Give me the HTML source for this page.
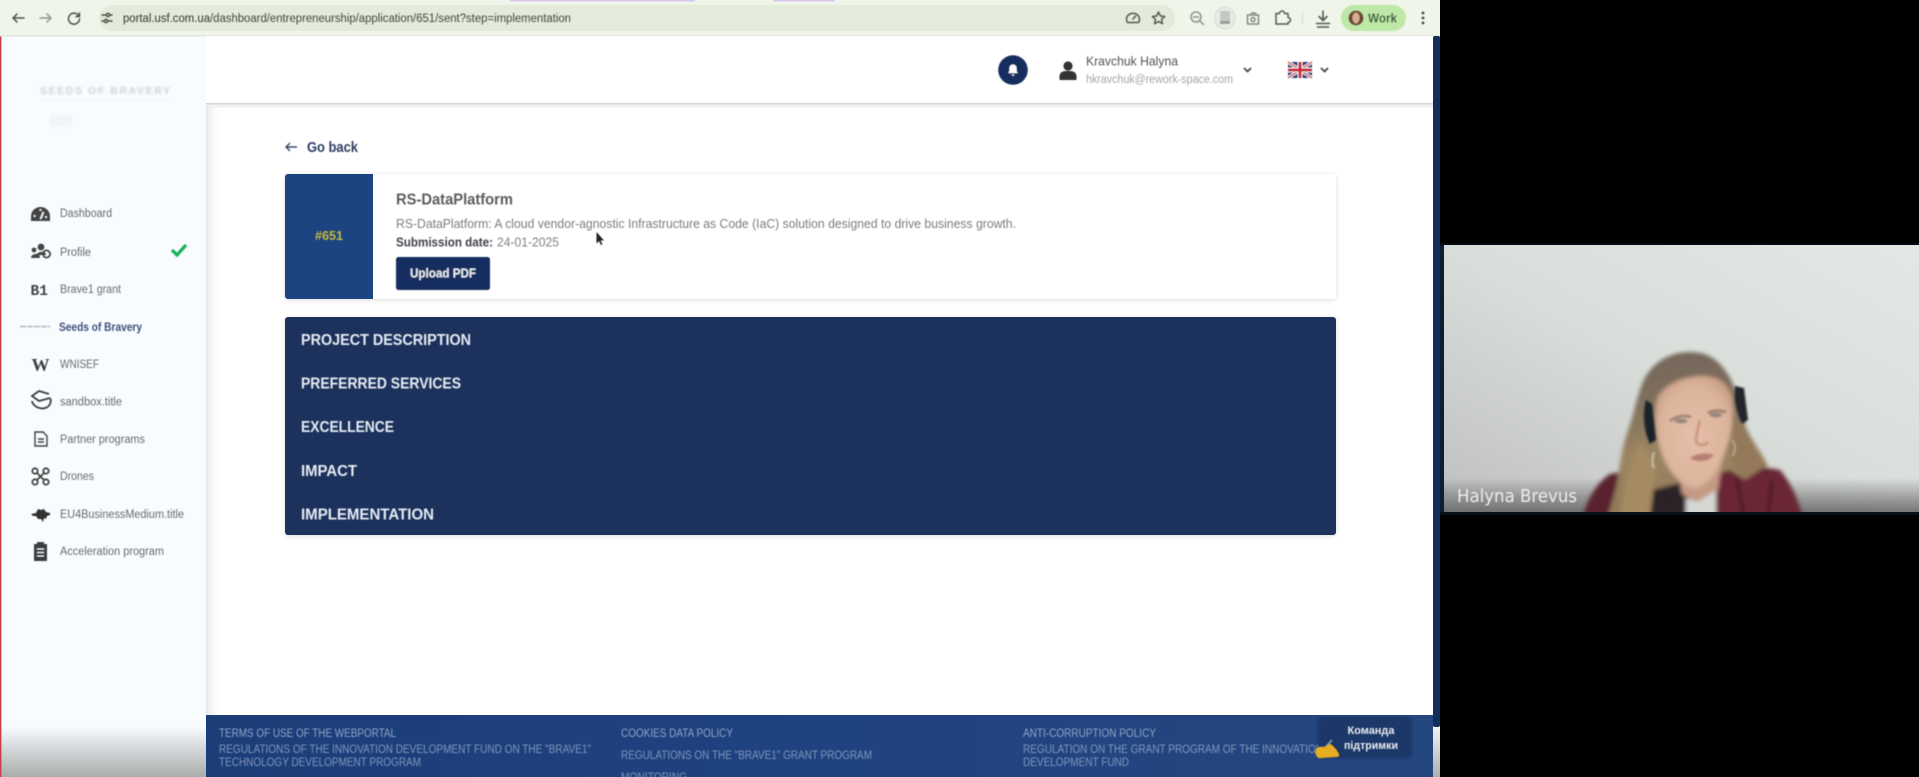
<!DOCTYPE html>
<html lang="en"><head><meta charset="utf-8"><title>RS-DataPlatform</title>
<style>html,body{margin:0;padding:0;background:#000;width:1919px;height:777px;overflow:hidden}svg{display:block}text{font-family:"Liberation Sans",sans-serif}</style></head>
<body>
<svg xmlns="http://www.w3.org/2000/svg" width="1919" height="777" viewBox="0 0 1919 777">
<defs>
<filter id="b" x="-5%" y="-5%" width="110%" height="110%"><feGaussianBlur stdDeviation="0.55"/></filter>
<filter id="b2" x="-20%" y="-20%" width="140%" height="140%"><feGaussianBlur stdDeviation="2"/></filter>
<filter id="b3" x="-40%" y="-40%" width="180%" height="180%"><feGaussianBlur stdDeviation="4"/></filter>
<filter id="b1" x="-30%" y="-30%" width="160%" height="160%"><feGaussianBlur stdDeviation="1"/></filter>
<filter id="sh" x="-3%" y="-10%" width="106%" height="125%"><feDropShadow dx="0" dy="1" stdDeviation="2.5" flood-color="#000" flood-opacity=".14"/></filter>
<linearGradient id="foot" x1="0" x2="1" y1="0" y2="0"><stop offset="0" stop-color="#1b3d78"/><stop offset=".5" stop-color="#1f4280"/><stop offset="1" stop-color="#25477f"/></linearGradient>
<linearGradient id="fade" x1="0" x2="0" y1="0" y2="1"><stop offset="0" stop-color="#a9abab" stop-opacity="0"/><stop offset="1" stop-color="#aaacac"/></linearGradient>
<linearGradient id="sbg" x1="0" x2="1" y1="0" y2="0"><stop offset="0" stop-color="#e4e7ea"/><stop offset="1" stop-color="#fff" stop-opacity="0"/></linearGradient>
<linearGradient id="vb" x1="1" x2="0" y1="0" y2="1"><stop offset="0" stop-color="#e4e8e4"/><stop offset=".5" stop-color="#dadeda"/><stop offset="1" stop-color="#bec0c0"/></linearGradient>
<linearGradient id="vf" x1="0" x2="0" y1="0" y2="1"><stop offset="0" stop-color="#555" stop-opacity="0"/><stop offset="1" stop-color="#5c5c5c" stop-opacity=".8"/></linearGradient>
<linearGradient id="sc" x1="0" x2="0" y1="0" y2="1"><stop offset="0" stop-color="#f2f2f2"/><stop offset="1" stop-color="#aeb0b0"/></linearGradient>
<linearGradient id="hair" x1="0" x2="0" y1="0" y2="1"><stop offset="0" stop-color="#75675a"/><stop offset=".3" stop-color="#7f6f5d"/><stop offset=".65" stop-color="#9c8561"/><stop offset="1" stop-color="#8f7858"/></linearGradient>
<radialGradient id="skin" cx=".5" cy=".55" r=".6"><stop offset="0" stop-color="#e6bea9"/><stop offset=".75" stop-color="#dcb49c"/><stop offset="1" stop-color="#c99f85"/></radialGradient>
<clipPath id="vc"><rect x="1444" y="245" width="475" height="267"/></clipPath>
</defs>

<rect width="1919" height="777" fill="#000"/>
<!-- page -->
<rect x="0" y="0" width="1440" height="777" fill="#fff"/>
<!-- sidebar -->
<rect x="0" y="36" width="206" height="741" fill="#f8fcff"/>
<rect x="206" y="36" width="16" height="680" fill="url(#sbg)"/>
<rect x="0" y="726" width="206" height="51" fill="url(#fade)"/>
<rect x="0" y="36" width="1.4" height="741" fill="#c8404a"/>

<!-- chrome -->
<rect x="0" y="0" width="1440" height="36" fill="#f0f5e9"/>
<rect x="0" y="35" width="1440" height="1.5" fill="#e0e6da"/>
<rect x="510" y="0" width="185" height="1.4" fill="#d9c6ee"/>
<rect x="773" y="0" width="62" height="1.4" fill="#d9c6ee"/>
<rect x="99" y="5" width="1076" height="26" rx="13" fill="#e4ebda"/>
<g filter="url(#b)">
<g fill="none" stroke="#4a4f48" stroke-width="1.5" stroke-linecap="round" stroke-linejoin="round">
<path d="M24 18H13M17 14l-4 4 4 4"/>
<path d="M40 18h11M47 14l4 4-4 4" stroke="#8f948c"/>
<path d="M78.5 15.5A5.5 5.5 0 1 0 79.5 19M79.5 13v3.5H76"/>
<path d="M102 15h4M110 15h2M102 21h2M108 21h4"/><circle cx="108" cy="15" r="1.6"/><circle cx="106" cy="21" r="1.6"/>
</g>
<text x="123" y="22" font-size="11.5" fill="#3f463d" textLength="448" lengthAdjust="spacingAndGlyphs"><tspan fill="#30362f">portal.usf.com.ua</tspan>/dashboard/entrepreneurship/application/651/sent?step=implementation</text>
<!-- right toolbar icons -->
<g fill="none" stroke="#555b52" stroke-width="1.5" stroke-linecap="round" stroke-linejoin="round">
<path d="M1127.5 22.5a6.5 6 0 1 1 11 0z"/><path d="M1133 19l2.5-3"/>
<path d="M1158.5 12l1.9 4 4.3.5-3.2 2.9.9 4.3-3.9-2.2-3.9 2.2.9-4.3-3.2-2.9 4.3-.5z"/>
<g stroke="#8f948c"><circle cx="1196" cy="17" r="5"/><path d="M1200 21l3.5 3.5M1193.5 17h5"/></g>
<path d="M1247.5 15h11v9h-11zM1250.5 15l1.5-2h3l1.5 2" stroke="#858a82"/><circle cx="1253" cy="19.5" r="2" stroke="#858a82"/>
<path d="M1276 14.5h3.5a2.5 2.5 0 0 1 5 0h3.5v4a2.5 2.5 0 0 1 0 5V25h-12z" transform="translate(0 -1)"/>
<path d="M1323 11v9M1319 16.5l4 4 4-4M1316.5 23.5h13M1317.5 27h11" stroke-width="1.6"/>
</g>
<rect x="1215" y="7" width="20" height="22" rx="10" fill="#e8ebe4" stroke="#d7dad3"/>
<rect x="1220" y="11" width="10" height="13" fill="#c4c8c2"/><rect x="1220" y="21" width="10" height="3" fill="#9a9f98"/>
<rect x="1302" y="12" width="1" height="12" fill="#d2d8cc"/>
<rect x="1341" y="5" width="65" height="26" rx="13" fill="#bde8a8"/>
<circle cx="1356" cy="18" r="7.5" fill="#6d4a34"/><ellipse cx="1356" cy="18" rx="3.6" ry="5.5" fill="#d7ad90"/>
<text x="1368" y="22.5" font-size="12.5" font-weight="700" fill="#3a5a38" textLength="29" lengthAdjust="spacingAndGlyphs">Work</text>
<circle cx="1423" cy="13" r="1.4" fill="#444"/><circle cx="1423" cy="18" r="1.4" fill="#444"/><circle cx="1423" cy="23" r="1.4" fill="#444"/>
</g>

<!-- header -->
<rect x="206" y="36" width="1227" height="68" fill="#fff"/>
<rect x="206" y="103" width="1227" height="1.6" fill="#d4d6d8"/>
<rect x="206" y="104.6" width="1227" height="3" fill="#f0f1f2"/>
<g filter="url(#b)">
<circle cx="1013" cy="70" r="14.8" fill="#182f5f"/>
<path d="M1013 64.5a3.6 3.6 0 0 0-3.6 3.6v3l-1.2 2h9.6l-1.2-2v-3a3.6 3.6 0 0 0-3.6-3.6zM1011.6 74.5h2.8l-1.4 1.6z" fill="#fff"/>
<circle cx="1068" cy="66" r="4.6" fill="#333"/><path d="M1059.5 80v-4.5a6 5 0 0 1 6-4.5h5a6 5 0 0 1 6 4.5V80z" fill="#333"/>
<text x="1086" y="65.5" font-size="12.5" fill="#555" textLength="92" lengthAdjust="spacingAndGlyphs">Kravchuk Halyna</text>
<text x="1086" y="83" font-size="11.5" fill="#a2a4a6" textLength="147" lengthAdjust="spacingAndGlyphs">hkravchuk@rework-space.com</text>
<path d="M1244 68l3.5 3.5 3.5-3.5M1321 68l3.5 3.5 3.5-3.5" fill="none" stroke="#444" stroke-width="1.7"/>
<rect x="1288" y="62" width="24" height="16" rx="2" fill="#1f3a78"/>
<path d="M1288 62l24 16M1312 62l-24 16" stroke="#f2e8ea" stroke-width="3.4"/>
<path d="M1288 62l24 16M1312 62l-24 16" stroke="#c63650" stroke-width="1.2"/>
<path d="M1300 62v16M1288 70h24" stroke="#f2e8ea" stroke-width="5"/>
<path d="M1300 62v16M1288 70h24" stroke="#c82840" stroke-width="3"/>
</g>

<!-- faint logo -->
<g filter="url(#b1)" opacity=".85">
<text x="40" y="94" font-size="10.5" font-weight="700" fill="#c8cacb" textLength="130" lengthAdjust="spacing">SEEDS OF BRAVERY</text>
<rect x="42" y="100" width="126" height="1.5" fill="#eceeee"/>
<rect x="50" y="115" width="22" height="12" fill="#f1f3f4"/>
</g>

<!-- sidebar menu -->
<g filter="url(#b)">
<g font-size="11.5" fill="#676a6e">
<text x="60" y="217" textLength="52" lengthAdjust="spacingAndGlyphs">Dashboard</text>
<text x="60" y="256" textLength="31" lengthAdjust="spacingAndGlyphs">Profile</text>
<text x="60" y="293" textLength="61" lengthAdjust="spacingAndGlyphs">Brave1 grant</text>
<text x="59" y="331" font-weight="700" fill="#3f4d7a" textLength="83" lengthAdjust="spacingAndGlyphs">Seeds of Bravery</text>
<text x="60" y="368" textLength="39" lengthAdjust="spacingAndGlyphs">WNISEF</text>
<text x="60" y="405.5" textLength="62" lengthAdjust="spacingAndGlyphs">sandbox.title</text>
<text x="60" y="443" textLength="85" lengthAdjust="spacingAndGlyphs">Partner programs</text>
<text x="60" y="480" textLength="34" lengthAdjust="spacingAndGlyphs">Drones</text>
<text x="60" y="518" textLength="124" lengthAdjust="spacingAndGlyphs">EU4BusinessMedium.title</text>
<text x="60" y="555" textLength="104" lengthAdjust="spacingAndGlyphs">Acceleration program</text>
</g>
<!-- dashboard -->
<path d="M31 221v-5a9.5 9 0 0 1 19 0v5z" fill="#444"/>
<path d="M40.5 219l3-7" stroke="#f8fcff" stroke-width="1.6"/><circle cx="34.5" cy="216" r="1" fill="#f8fcff"/><circle cx="46" cy="217" r="1" fill="#f8fcff"/><circle cx="40.5" cy="210" r="1" fill="#f8fcff"/>
<!-- profile -->
<circle cx="41" cy="247" r="3.4" fill="#444"/><circle cx="34" cy="250" r="2.4" fill="#444"/><path d="M31 258c0-4 6-5 8-3 1 1 1 3 1 3z" fill="#444"/><path d="M36 255c2-4 9-4 10-1v1z" fill="#444"/><circle cx="46.5" cy="254" r="3.6" fill="none" stroke="#444" stroke-width="1.8"/>
<path d="M172 250l5 5 9-10" fill="none" stroke="#14b25c" stroke-width="3.2"/>
<text x="30.5" y="295" font-size="15" font-weight="700" fill="#444" style="font-family:'Liberation Mono',monospace" textLength="17.5" lengthAdjust="spacingAndGlyphs">B1</text>
<path d="M20 326.5h30" stroke="#b3b5b8" stroke-width="1.6" stroke-dasharray="6 1"/>
<text x="31.5" y="371" font-size="18" font-weight="700" fill="#3c3f42" style="font-family:'Liberation Serif',serif" textLength="18" lengthAdjust="spacingAndGlyphs">W</text>
<!-- sandbox -->
<path d="M49 394l-10 -3-7 5 7 5 11 -3M32 401c1 7 14 11 18 3M50 398c1 2 1 4 0 6" fill="none" stroke="#3c3f42" stroke-width="1.8"/>
<!-- doc -->
<path d="M35 432h8l4 4v10H35zM38 439h6M38 442h6" fill="none" stroke="#3f4245" stroke-width="1.4"/>
<!-- drone -->
<g fill="none" stroke="#444" stroke-width="1.8"><circle cx="35" cy="471" r="2.7"/><circle cx="46" cy="471" r="2.7"/><circle cx="35" cy="482" r="2.7"/><circle cx="46" cy="482" r="2.7"/><path d="M37 473l7 7M44 473l-7 7"/></g>
<!-- ukraine -->
<path d="M31 514l5-1 2-4 3 1 3-1 2 3 4 1 0 2-3 1-1 3-2-1-1 4-2-3-3 0-2-3-3 0z" fill="#333"/>
<!-- clipboard -->
<path d="M34 544h3v-2h7v2h3v17H34z" fill="#3a3d40"/><path d="M37 549h7M37 552.5h7M37 556h7" stroke="#f8fcff" stroke-width="1"/>
</g>

<!-- go back -->
<g filter="url(#b)">
<path d="M297 147h-11M290 143l-4 4 4 4" fill="none" stroke="#3a4668" stroke-width="1.4"/>
<text x="307" y="152" font-size="14.5" font-weight="700" fill="#2f3d63" textLength="51" lengthAdjust="spacingAndGlyphs">Go back</text>
</g>

<!-- card -->
<rect x="285" y="174" width="1051" height="125" rx="3" fill="#fff" filter="url(#sh)"/>
<path d="M288 174h85v125h-85a3 3 0 0 1-3-3V177a3 3 0 0 1 3-3z" fill="#1c4480"/>
<g filter="url(#b)">
<text x="315" y="240" font-size="12.5" font-weight="700" fill="#c9bb3f" textLength="28" lengthAdjust="spacingAndGlyphs">#651</text>
<text x="396" y="204.5" font-size="16" font-weight="700" fill="#5a5d60" textLength="117" lengthAdjust="spacingAndGlyphs">RS-DataPlatform</text>
<text x="396" y="228" font-size="13" fill="#7b7d80" textLength="620" lengthAdjust="spacingAndGlyphs">RS-DataPlatform: A cloud vendor-agnostic Infrastructure as Code (IaC) solution designed to drive business growth.</text>
<text x="396" y="246.5" font-size="13" font-weight="700" fill="#414349" textLength="97" lengthAdjust="spacingAndGlyphs">Submission date:</text>
<text x="497" y="246.5" font-size="13" fill="#7f8184" textLength="62" lengthAdjust="spacingAndGlyphs">24-01-2025</text>
<rect x="396" y="257" width="94" height="33" rx="2.5" fill="#182f5e"/>
<text x="410" y="277.5" font-size="13" font-weight="700" fill="#e8ecf2" textLength="66" lengthAdjust="spacingAndGlyphs">Upload PDF</text>
<path d="M596.5 232v11.5l2.6-2.4 1.8 4 1.5-.7-1.8-3.9h3.4z" fill="#222"/>
</g>

<!-- accordion -->
<rect x="285" y="317" width="1051" height="218" rx="3" fill="#1a305b" filter="url(#sh)"/>
<g filter="url(#b)" font-size="16" font-weight="700" fill="#e6ebf3">
<text x="301" y="345" textLength="170" lengthAdjust="spacingAndGlyphs">PROJECT DESCRIPTION</text>
<text x="301" y="388.5" textLength="160" lengthAdjust="spacingAndGlyphs">PREFERRED SERVICES</text>
<text x="301" y="432" textLength="93" lengthAdjust="spacingAndGlyphs">EXCELLENCE</text>
<text x="301" y="476" textLength="56" lengthAdjust="spacingAndGlyphs">IMPACT</text>
<text x="301" y="519.5" textLength="133" lengthAdjust="spacingAndGlyphs">IMPLEMENTATION</text>
</g>

<!-- footer -->
<rect x="206" y="715" width="1227" height="62" fill="url(#foot)"/>
<g filter="url(#b)" font-size="11.5" fill="#8fa4c6">
<text x="219" y="737" textLength="177" lengthAdjust="spacingAndGlyphs">TERMS OF USE OF THE WEBPORTAL</text>
<text x="219" y="753" fill="#7f96bc" textLength="372" lengthAdjust="spacingAndGlyphs">REGULATIONS OF THE INNOVATION DEVELOPMENT FUND ON THE "BRAVE1"</text>
<text x="219" y="766" fill="#7f96bc" textLength="202" lengthAdjust="spacingAndGlyphs">TECHNOLOGY DEVELOPMENT PROGRAM</text>
<text x="621" y="737" textLength="112" lengthAdjust="spacingAndGlyphs">COOKIES DATA POLICY</text>
<text x="621" y="759" fill="#7f96bc" textLength="251" lengthAdjust="spacingAndGlyphs">REGULATIONS ON THE "BRAVE1" GRANT PROGRAM</text>
<text x="621" y="781" fill="#7f96bc" textLength="66" lengthAdjust="spacingAndGlyphs">MONITORING</text>
<text x="1023" y="737" textLength="133" lengthAdjust="spacingAndGlyphs">ANTI-CORRUPTION POLICY</text>
<text x="1023" y="753" fill="#7f96bc" textLength="300" lengthAdjust="spacingAndGlyphs">REGULATION ON THE GRANT PROGRAM OF THE INNOVATION</text>
<text x="1023" y="766" fill="#7f96bc" textLength="106" lengthAdjust="spacingAndGlyphs">DEVELOPMENT FUND</text>
</g>
<!-- support widget -->
<rect x="1318" y="717" width="94" height="41" rx="5" fill="#1c3768" filter="url(#b1)"/>
<g filter="url(#b)">
<text x="1371" y="734" text-anchor="middle" font-size="11" font-weight="700" fill="#e8ecf1" textLength="47" lengthAdjust="spacingAndGlyphs" style="font-family:'Liberation Sans','Noto Sans CJK SC',sans-serif">Команда</text>
<text x="1371" y="749" text-anchor="middle" font-size="11" font-weight="700" fill="#e8ecf1" textLength="54" lengthAdjust="spacingAndGlyphs" style="font-family:'Liberation Sans','Noto Sans CJK SC',sans-serif">підтримки</text>
<path d="M1332 740l-9 10" stroke="#8294ae" stroke-width="1.8"/>
<path d="M1315 752c1-5 5-6 9-5l6-3c2 0 8 7 9 10 1 2-1 3-3 3l-15 1c-3 1-5-2-6-6z" fill="#e6ac22"/>
</g>

<!-- scrollbar -->
<rect x="1433" y="36" width="7" height="691" rx="2" fill="#142e5a"/>
<rect x="1433" y="727" width="7" height="50" fill="url(#sc)"/>

<!-- video tile -->
<rect x="1440" y="243" width="479" height="272" fill="#040a12"/>
<rect x="1440" y="245" width="4" height="267" fill="#0c1e36"/>
<g clip-path="url(#vc)">
<rect x="1444" y="245" width="475" height="267" fill="url(#vb)"/>
<rect x="1444" y="478" width="475" height="34" fill="url(#vf)"/>
<g filter="url(#b2)">
<!-- jacket -->
<path d="M1583 516C1588 498 1596 484 1610 474L1650 468L1730 462L1780 470C1790 482 1798 498 1802 516Z" fill="#5a202d"/>
<path d="M1640 474L1690 478L1690 516L1630 516Z" fill="#2a2325"/>
<path d="M1715 516L1712 488L1722 466L1738 476L1780 470C1790 482 1798 498 1802 516Z" fill="#6b2634"/>
<path d="M1736 476L1744 516M1772 480L1768 516" stroke="#471824" stroke-width="3" fill="none"/>
<!-- hair -->
<path d="M1690 352C1668 352 1650 364 1642 384C1636 400 1634 414 1628 430C1622 448 1620 462 1618 478C1616 490 1612 502 1608 516L1642 516L1652 490L1730 470L1742 478L1768 466C1762 452 1750 440 1745 424C1740 408 1738 392 1730 378C1720 360 1708 352 1690 352Z" fill="url(#hair)"/>
<path d="M1620 516C1622 490 1630 465 1640 440L1656 470L1650 516Z" fill="#a58b62"/>
<path d="M1738 420L1766 466L1745 480L1730 460Z" fill="#94795a"/>
<!-- neck & shirt -->
<path d="M1678 470L1722 462L1718 490L1698 504L1682 494Z" fill="#c49a84"/>
<path d="M1686 498L1698 502L1716 490L1716 516L1686 516Z" fill="#d6d8d4"/>
<!-- face -->
<path d="M1658 396C1668 382 1686 376 1704 376C1718 376 1729 384 1732 398C1735 416 1731 436 1725 452C1719 470 1708 486 1696 488C1680 488 1664 466 1659 444C1655 428 1654 410 1658 396Z" fill="url(#skin)"/>
</g>
<g filter="url(#b1)">
<path d="M1670 421C1676 416 1684 415 1691 417M1708 413C1713 410 1720 410 1726 412" fill="none" stroke="#8e6f60" stroke-width="2"/>
<ellipse cx="1681" cy="421" rx="6.5" ry="2.2" fill="#8d8480"/><ellipse cx="1716" cy="415" rx="6.5" ry="2.2" fill="#8d8480"/>
<path d="M1700 420C1698 428 1696 436 1696 442C1699 446 1705 446 1708 442" fill="none" stroke="#c6917c" stroke-width="2.4"/>
<path d="M1690 458C1696 454 1704 452 1714 455C1708 462 1697 463 1690 458Z" fill="#b87e74"/>
<path d="M1646 400C1642 414 1644 432 1650 444L1656 440L1652 404Z" fill="#1f2429"/>
<path d="M1735 386C1733 398 1737 414 1742 424L1748 420L1744 388Z" fill="#22262b"/>
<path d="M1654 452C1652 458 1652 464 1654 468" fill="none" stroke="#d8d8d4" stroke-width="1.5"/>
<path d="M1732 440C1736 444 1736 452 1732 456" fill="none" stroke="#c8b8a0" stroke-width="1.5"/>
</g>
</g>
<rect x="1440" y="512" width="479" height="3" fill="#0a0f14"/>
<text x="1457" y="502" font-size="18" fill="#eceeee" filter="url(#b)" textLength="120" lengthAdjust="spacingAndGlyphs" style="font-family:'DejaVu Sans',sans-serif">Halyna Brevus</text>
</svg>
</body></html>
